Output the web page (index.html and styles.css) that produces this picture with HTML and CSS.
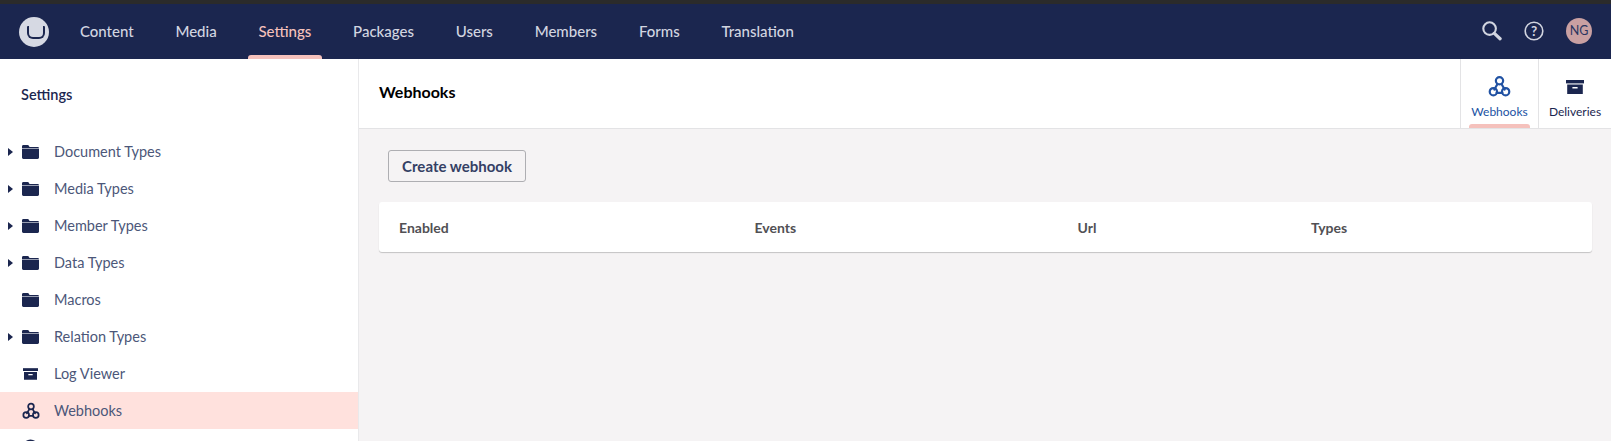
FILE: index.html
```html
<!DOCTYPE html>
<html lang="en">
<head>
    <meta charset="UTF-8">
    <title>Webhooks - Settings</title>
    <link rel="stylesheet" href="styles.css">
</head>
<body>

<svg class="icon-defs" width="0" height="0">
    <symbol id="folder" viewBox="0 0 17 14">
        <path d="M0 3V1.4C0 .6.6 0 1.4 0h4.2c.6 0 1 .3 1.3.8l.6 1.2h8c.8 0 1.5.5 1.5 1.2H0z"/>
        <path d="M0 3.8h17v8.8c0 .8-.6 1.4-1.4 1.4H1.4C.6 14 0 13.4 0 12.6z"/>
    </symbol>
    <symbol id="box" viewBox="0 0 18 14">
        <path d="M0 0h18v3.4H0z"/>
        <path fill-rule="evenodd" d="M1.2 4.6h15.6V14H1.2zM6.4 7v1.6h5.2V7z"/>
    </symbol>
    <symbol id="webhook" viewBox="0 0 24 24">
        <g fill="none" stroke="currentColor" stroke-width="2.3" stroke-linecap="round">
            <circle cx="12" cy="6" r="3.8"/>
            <circle cx="5.6" cy="17.4" r="3.8"/>
            <circle cx="18.4" cy="17.4" r="3.8"/>
            <path d="M9.9 9.4 6.6 15.2M14.1 9.4l3.3 5.8M9 18.6h6"/>
        </g>
    </symbol>
</svg>

<div class="top-strip"></div>

<header class="topbar">
    <div class="logo"><span class="logo-u"></span></div>
    <nav class="sections">
        <a class="section">Content</a>
        <a class="section">Media</a>
        <a class="section active">Settings</a>
        <a class="section">Packages</a>
        <a class="section">Users</a>
        <a class="section">Members</a>
        <a class="section">Forms</a>
        <a class="section">Translation</a>
    </nav>
    <div class="tools">
        <svg class="tool-icon" viewBox="0 0 22 22" fill="none" stroke="currentColor">
            <circle cx="9" cy="9" r="6.6" stroke-width="2.2"/>
            <path d="M14 14l6 5.6" stroke-width="3.4" stroke-linecap="round"/>
        </svg>
        <svg class="tool-icon help" viewBox="0 0 20 20" fill="none" stroke="currentColor">
            <circle cx="10" cy="10" r="8.8" stroke-width="1.6"/>
            <text x="10" y="14.8" text-anchor="middle" class="help-mark">?</text>
        </svg>
        <div class="avatar">NG</div>
    </div>
</header>

<div class="layout">
    <aside class="sidebar">
        <div class="sidebar-title">Settings</div>
        <ul class="tree">
            <li class="tree-row has-children"><svg class="tree-icon"><use href="#folder"/></svg>Document Types</li>
            <li class="tree-row has-children"><svg class="tree-icon"><use href="#folder"/></svg>Media Types</li>
            <li class="tree-row has-children"><svg class="tree-icon"><use href="#folder"/></svg>Member Types</li>
            <li class="tree-row has-children"><svg class="tree-icon"><use href="#folder"/></svg>Data Types</li>
            <li class="tree-row"><svg class="tree-icon"><use href="#folder"/></svg>Macros</li>
            <li class="tree-row has-children"><svg class="tree-icon"><use href="#folder"/></svg>Relation Types</li>
            <li class="tree-row"><svg class="tree-icon box"><use href="#box"/></svg>Log Viewer</li>
            <li class="tree-row selected"><svg class="tree-icon hook"><use href="#webhook"/></svg>Webhooks</li>
            <li class="tree-row"><svg class="tree-icon globe" viewBox="0 0 18 18"><circle cx="9" cy="9" r="7.6" fill="none" stroke="currentColor" stroke-width="1.8"/></svg></li>
        </ul>
    </aside>

    <main class="main">
        <div class="main-header">
            <h1 class="main-title">Webhooks</h1>
            <div class="view-tabs">
                <a class="view-tab active"><svg class="view-icon hook"><use href="#webhook"/></svg>Webhooks</a>
                <a class="view-tab"><svg class="view-icon box"><use href="#box"/></svg>Deliveries</a>
            </div>
        </div>
        <div class="main-body">
            <button class="btn-create">Create webhook</button>
            <div class="table-card">
                <span>Enabled</span>
                <span>Events</span>
                <span>Url</span>
                <span>Types</span>
            </div>
        </div>
    </main>
</div>

</body>
</html>
```

FILE: styles.css
```css
* {
    box-sizing: border-box;
}
html, body {
    height: 100%;
}
body {
    margin: 0;
    font-family: Lato, "Open Sans", sans-serif;
    font-size: 15px;
    color: #303f6b;
    background: #fff;
    overflow: hidden;
    display: flex;
    flex-direction: column;
}
.icon-defs {
    position: absolute;
}
.top-strip {
    height: 4px;
    background: #2b2b2b;
    flex: none;
}

/* top bar */
.topbar {
    height: 55px;
    flex: none;
    display: flex;
    align-items: stretch;
    background: #1b264f;
    color: #d2d5e0;
}
.logo {
    width: 59px;
    padding-left: 19px;
    display: flex;
    align-items: center;
    flex: none;
}
.logo-u {
    width: 30px;
    height: 30px;
    border-radius: 50%;
    background: #d6d9e3;
    position: relative;
}
.logo-u::after {
    content: "";
    position: absolute;
    left: 8px;
    top: 9px;
    width: 14px;
    height: 11px;
    border: 2.5px solid #1b264f;
    border-top: 0;
    border-radius: 1px 1px 6px 6px;
}
.sections {
    display: flex;
    flex: 1;
}
.section {
    position: relative;
    display: flex;
    align-items: center;
    padding: 0 20.9px 2px;
    font-size: 15px;
    font-weight: 500;
}
.section.active {
    color: #f5c1bc;
}
.section.active::after {
    content: "";
    position: absolute;
    left: 10px;
    right: 10px;
    bottom: 0;
    height: 4px;
    background: #f5c1bc;
    border-radius: 3px 3px 0 0;
}
.tools {
    display: flex;
    align-items: center;
    gap: 22px;
    padding-right: 19px;
    padding-bottom: 2px;
}
.tool-icon {
    width: 21px;
    height: 21px;
}
.tool-icon.help {
    width: 20px;
    height: 20px;
}
.help-mark {
    font-size: 13.5px;
    font-weight: 700;
    fill: currentColor;
    stroke: none;
}
.avatar {
    width: 26px;
    height: 26px;
    border-radius: 50%;
    background: #c9a0a2;
    color: #2a3560;
    font-size: 12.5px;
    display: flex;
    align-items: center;
    justify-content: center;
}

.layout {
    flex: 1;
    display: flex;
    min-height: 0;
}

/* tree */
.sidebar {
    width: 359px;
    flex: none;
    border-right: 1px solid #e9e9eb;
    overflow: hidden;
}
.sidebar-title {
    padding: 27px 0 0 21px;
    height: 74px;
    font-size: 14.5px;
    font-weight: 600;
    color: #1b264f;
}
.tree {
    list-style: none;
    margin: 0;
    padding: 0;
}
.tree-row {
    position: relative;
    height: 37px;
    padding-left: 22px;
    display: flex;
    align-items: center;
    font-size: 14.5px;
    color: #4c5779;
}
.tree-row.has-children::before {
    content: "";
    position: absolute;
    left: 8px;
    top: 15px;
    border-left: 5px solid #1b264f;
    border-top: 4px solid transparent;
    border-bottom: 4px solid transparent;
}
.tree-icon {
    width: 17px;
    height: 14px;
    margin-right: 15px;
    fill: #1b264f;
    color: #1b264f;
}
.tree-icon.box {
    width: 15px;
    height: 12px;
    margin: 0 16px 0 1px;
}
.tree-icon.hook {
    width: 18px;
    height: 18px;
    margin: 0 14px 0 0;
}
.tree-icon.globe {
    width: 17px;
    height: 17px;
}
.tree-row.selected {
    background: #ffe1dd;
}

/* main */
.main {
    flex: 1;
    display: flex;
    flex-direction: column;
    min-width: 0;
    background: #f5f3f4;
}
.main-header {
    height: 70px;
    flex: none;
    display: flex;
    align-items: stretch;
    justify-content: space-between;
    background: #fff;
    border-bottom: 1px solid #e3e3e5;
    padding-left: 20px;
}
.main-title {
    margin: 0;
    align-self: center;
    font-size: 16px;
    font-weight: 700;
    color: #000;
    padding-bottom: 5px;
}
.view-tabs {
    display: flex;
}
.view-tab {
    position: relative;
    display: flex;
    flex-direction: column;
    align-items: center;
    border-left: 1px solid #e3e3e5;
    padding-top: 16px;
    font-size: 12px;
    color: #1b264f;
}
.view-tab:first-child {
    width: 78px;
}
.view-tab:last-child {
    width: 73px;
}
.view-tab.active {
    color: #2152a3;
}
.view-tab.active::after {
    content: "";
    position: absolute;
    left: 8px;
    right: 8px;
    bottom: 0;
    height: 4px;
    background: #f5c1bc;
    border-radius: 3px 3px 0 0;
}
.view-icon {
    width: 23px;
    height: 23px;
    margin-bottom: 6px;
    fill: currentColor;
}
.view-icon.box {
    width: 18px;
    height: 14px;
    margin: 5px 0 10px;
}
.main-body {
    padding: 21px 19px 0 20px;
}
.btn-create {
    display: block;
    height: 32px;
    width: 138px;
    margin: 0 0 20px 9px;
    padding: 0;
    border: 1px solid #aeaeb2;
    border-radius: 3px;
    background: transparent;
    font-family: inherit;
    font-size: 15px;
    font-weight: 700;
    color: #343f64;
}
.table-card {
    height: 50px;
    display: grid;
    grid-template-columns: 355.5px 323px 233.5px 1fr;
    align-items: center;
    padding-left: 20px;
    background: #fff;
    border-radius: 3px;
    box-shadow: 0 1px 1px rgba(0,0,0,0.2);
    font-size: 14px;
    font-weight: 700;
    color: #515054;
}
```
